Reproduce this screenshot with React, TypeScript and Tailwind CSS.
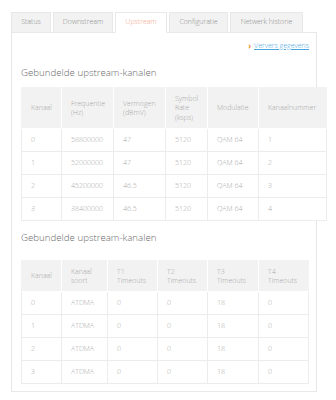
import React from "react";

const tabs = [
  { label: "Status", w: "w-[40px]" },
  { label: "Downstream", w: "w-[60px]" },
  { label: "Upstream", w: "w-[52px]", active: true },
  { label: "Configuratie", w: "w-[59px]" },
  { label: "Netwerk historie", w: "w-[73px]" },
];

const t1Head = ["Kanaal", "Frequentie\n(Hz)", "Vermogen\n(dBmV)", "Symbol\nRate\n(ksps)", "Modulatie", "Kanaalnummer"];
const t1W = ["w-[40px]", "w-[52px]", "w-[52px]", "w-[42px]", "w-[51px]", "w-[68px]"];
const t1Rows = [
  ["0", "58800000", "47", "5120", "QAM 64", "1"],
  ["1", "52000000", "47", "5120", "QAM 64", "2"],
  ["2", "45200000", "46.5", "5120", "QAM 64", "3"],
  ["3", "38400000", "46.5", "5120", "QAM 64", "4"],
];

const t2Head = ["Kanaal", "Kanaal\nsoort", "T1\nTimeouts", "T2\nTimeouts", "T3\nTimeouts", "T4\nTimeouts"];
const t2W = ["w-[40px]", "w-[46px]", "w-[50px]", "w-[50px]", "w-[51px]", "w-[50px]"];
const t2Rows = [
  ["0", "ATDMA", "0", "0", "18", "0"],
  ["1", "ATDMA", "0", "0", "18", "0"],
  ["2", "ATDMA", "0", "0", "18", "0"],
  ["3", "ATDMA", "0", "0", "18", "0"],
];

function DataTable({
  head,
  widths,
  rows,
  headH,
  tw,
}: {
  head: string[];
  widths: string[];
  rows: string[][];
  headH: string;
  tw: string;
}) {
  return (
    <table className={`${tw} border-collapse table-fixed bg-white text-[7px] leading-[9.5px] text-[#a8a8a8] font-light`}>
      <colgroup>
        {widths.map((w, i) => (
          <col key={i} className={w} />
        ))}
      </colgroup>
      <thead>
        <tr className={headH}>
          {head.map((h, i) => (
            <th
              key={i}
              className={`bg-[#f2f2f2] border border-white border-t-[#f2f2f2] font-light text-left align-middle pl-[9px] whitespace-pre overflow-hidden ${
                i === 0 ? "border-l-[#f2f2f2]" : ""
              } ${i === head.length - 1 ? "border-r-[#f2f2f2]" : ""}`}
            >
              {h}
            </th>
          ))}
        </tr>
      </thead>
      <tbody>
        {rows.map((r, ri) => (
          <tr key={ri} className="h-[23px]">
            {r.map((c, ci) => (
              <td key={ci} className="border border-[#ececec] pl-[9px] align-middle">
                {c}
              </td>
            ))}
          </tr>
        ))}
      </tbody>
    </table>
  );
}

export default function App() {
  return (
    <div className="w-[336px] h-[400px] bg-white pt-[12px] pl-[11px] font-['Open_Sans',sans-serif] font-light overflow-hidden">
      <div className="flex gap-[2px] h-[20px] relative z-10">
        {tabs.map((t) => (
          <div
            key={t.label}
            className={`${t.w} h-[21px] flex items-center justify-center text-[7px] border border-[#e8e8e8] ${
              t.active ? "bg-white border-b-white text-[#f6a387]" : "bg-[#f2f2f2] text-[#8c8c8c]"
            }`}
          >
            {t.label}
          </div>
        ))}
      </div>
      <div className="w-[306px] h-[360px] border border-[#e8e8e8] bg-white pl-[9px]">
        <div className="flex justify-end items-center pr-[7px] pt-[7px] h-[19px] text-[7px]">
          <span className="text-[#f08a24] font-bold mr-[3px] text-[8px]">›</span>
          <span className="text-[#4aa6df] underline">Ververs gegevens</span>
        </div>
        <div className="mt-[14px] text-[9.7px] leading-[14px] text-[#6a6a6a]">Gebundelde upstream-kanalen</div>
        <div className="mt-[7px]">
          <DataTable head={t1Head} widths={t1W} rows={t1Rows} headH="h-[41px]" tw="w-[305px]" />
        </div>
        <div className="mt-[10px] text-[9.7px] leading-[14px] text-[#6a6a6a]">Gebundelde upstream-kanalen</div>
        <div className="mt-[15px]">
          <DataTable head={t2Head} widths={t2W} rows={t2Rows} headH="h-[31px]" tw="w-[287px]" />
        </div>
      </div>
    </div>
  );
}
